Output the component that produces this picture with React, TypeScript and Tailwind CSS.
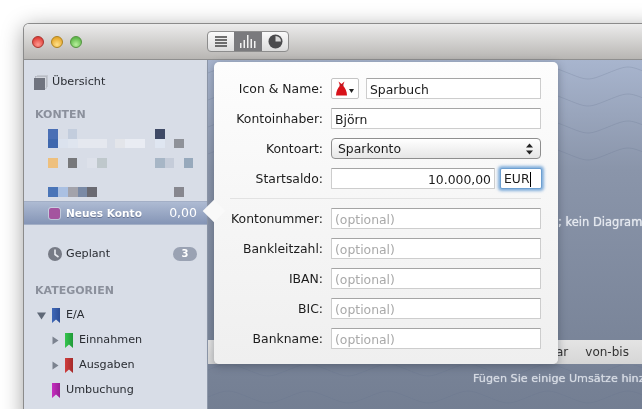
const font = "font-['DejaVu_Sans','Liberation_Sans',sans-serif]";

// pixelated account rows, every entry is one block of the mosaic
const blurRows: string[][] = [
  ["w-[10px] bg-[#4a6fb5]", "w-[10px]", "w-[9px] bg-[#c3cddd]", "w-[78px]", "w-[10px] bg-[#3f4a66]"],
  ["w-[10px] bg-[#3f68ae]", "w-[10px] bg-[#dbe2ee]", "w-[10px] bg-[#dfe5ef]", "w-[29px] bg-[#e5e8ef]", "w-[8px]", "w-[10px] bg-[#e3e5ea]", "w-[20px] bg-[#e9ecf3]", "w-[10px]", "w-[10px] bg-[#dfe6f1]", "w-[9px]", "w-[10px] bg-[#8f9299]"],
  [],
  ["w-[10px] bg-[#eec07e]", "w-[10px]", "w-[9px] bg-[#77787b]", "w-[10px]", "w-[10px] bg-[#dde1ea]", "w-[10px] bg-[#bfc8cc]", "w-[48px]", "w-[10px] bg-[#a7b6c6]", "w-[9px] bg-[#c5ccd9]", "w-[10px]", "w-[9px] bg-[#97a9bc]"],
  [],
  [],
  ["w-[10px] bg-[#4a75b8]", "w-[10px] bg-[#aac0e2]", "w-[10px] bg-[#a3a3ab]", "w-[9px] bg-[#7a8aa6]", "w-[10px] bg-[#6a6a72]", "w-[77px]", "w-[10px] bg-[#87878f]"],
];

function Bookmark({ top, bottom }: { top: string; bottom: string }) {
  return (
    <svg width="8" height="15" viewBox="0 0 8 15" className="shrink-0">
      <defs>
        <linearGradient id={`b${top}`} x1="0" x2="1" y1="0" y2="0">
          <stop offset="0" stopColor={top} />
          <stop offset="1" stopColor={bottom} />
        </linearGradient>
      </defs>
      <path d="M0 0h8v15l-4-3.5L0 15z" fill={`url(#b${top})`} />
    </svg>
  );
}

function Triangle({ down }: { down?: boolean }) {
  return (
    <svg width="9" height="9" viewBox="0 0 9 9" className="shrink-0">
      {down ? <path d="M0 1.5h9L4.5 8.5z" fill="#5f6877" /> : <path d="M1.5 0.5l6 4-6 4z" fill="#7b828f" />}
    </svg>
  );
}

function Sidebar() {
  return (
    <aside className="w-[184px] shrink-0 bg-[#d8dde7] pt-[10px] text-[11.2px] text-[#2a2d33] border-r border-[#8d97a9]">
      <div className="h-[24px] flex items-center pl-[10px] gap-[4px]">
        <svg width="14" height="15" viewBox="0 0 14 15" className="shrink-0">
          <rect x="3" y="0" width="11" height="12" fill="#c4c8d0" />
          <rect x="1.500" y="1.500" width="11" height="12" fill="#d5d8df" stroke="#a4a8b2" strokeWidth="0.5" />
          <rect x="0" y="3" width="11" height="12" fill="#70747f" />
        </svg>
        <span>Übersicht</span>
      </div>
      <div className="mt-[13px] h-[16px] pl-[11px] flex items-center text-[11px] font-bold text-[#8b909c]">KONTEN</div>

      <div className="mt-[6px] h-[72px] pl-[24px] blur-[0.5px]">
        {blurRows.map((row, i) => (
          <div key={i} className="flex h-[9.7px]">
            {row.map((block, j) => (
              <div key={j} className={block} />
            ))}
          </div>
        ))}
      </div>

      <div className="h-[24px] flex items-center pl-[25px] pr-[10px] pt-[1px] bg-gradient-to-b from-[#aebbd3] to-[#8595b6] border-y border-[#a3afc6] font-bold text-white">
        <div className="w-[11px] h-[11px] rounded-[2px] bg-[#a4549f] mr-[6px] outline outline-white/40" />
        <span className="text-[10.6px] [text-shadow:0_1px_0_rgba(60,70,100,0.5)]">Neues Konto</span>
        <span className="ml-auto font-normal text-[12.5px]">0,00</span>
      </div>

      <div className="mt-[17px] h-[24px] flex items-center pl-[24px] pr-[10px]">
        <svg width="14" height="14" viewBox="0 0 14 14" className="shrink-0">
          <circle cx="7" cy="7" r="7" fill="#777b86" />
          <path d="M7 2.500V7.500L10.500 10" fill="none" stroke="#e8eaef" strokeWidth="1.600" />
        </svg>
        <span className="ml-[4px]">Geplant</span>
        <span className="ml-auto w-[24px] h-[14px] rounded-full bg-[#9aa2b3] text-white font-bold text-[10px] leading-[14px] text-center">3</span>
      </div>

      <div className="mt-[17px] h-[16px] pl-[11px] flex items-center text-[11px] font-bold text-[#8b909c]">KATEGORIEN</div>

      <div className="mt-[4px] h-[25px] flex items-center pl-[13px]">
        <Triangle down />
        <div className="ml-[6px] flex items-center gap-[6px]">
          <Bookmark top="#3f68b8" bottom="#2d4e96" />
          <span>E/A</span>
        </div>
      </div>
      <div className="h-[25px] flex items-center pl-[27px]">
        <Triangle />
        <div className="ml-[5px] flex items-center gap-[6px]">
          <Bookmark top="#36c44f" bottom="#1f9a38" />
          <span>Einnahmen</span>
        </div>
      </div>
      <div className="h-[25px] flex items-center pl-[27px]">
        <Triangle />
        <div className="ml-[5px] flex items-center gap-[6px]">
          <Bookmark top="#cf3d3d" bottom="#a52a2a" />
          <span>Ausgaben</span>
        </div>
      </div>
      <div className="h-[25px] flex items-center pl-[28px] gap-[6px]">
        <Bookmark top="#c62fc0" bottom="#981f95" />
        <span>Umbuchung</span>
      </div>
    </aside>
  );
}

function Field({ label, children }: { label: string; children: React.ReactNode }) {
  return (
    <div className="flex items-center h-[21px] gap-[8px]">
      <label className="w-[109px] pt-[1px] text-right text-[12.4px] text-[#1c1c1c]">{label}</label>
      {children}
    </div>
  );
}

const inputCls =
  "h-[21px] min-w-0 bg-white px-[3px] pt-[1px] text-[12.4px] text-[#1c1c1c] placeholder:text-[#a9a9a9] border border-[#cdcdcd] border-t-[#a5a5a5] rounded-[1px] outline-none " + font;

function TextField({ value, placeholder }: { value?: string; placeholder?: string }) {
  return <input readOnly defaultValue={value} placeholder={placeholder} className={`${inputCls} w-[210px]`} />;
}

function Popover() {
  return (
    <div className="absolute left-[190px] top-[38px] w-[344px] h-[302px] rounded-[5px] bg-gradient-to-b from-[#fdfdfd] to-[#efefef] shadow-[0_2px_8px_rgba(30,35,50,0.35)] pt-[16px] flex flex-col">
      <div className="absolute left-[-8px] top-[141px] w-[16px] h-[16px] rotate-45 bg-[#f9f9f9]" />
      <div className="relative flex flex-col gap-[9px]">
        <Field label="Icon & Name:">
          <div className="w-[28px] h-[21px] border border-[#c4c4c4] rounded-[2px] bg-white flex items-center justify-center gap-[2px] shrink-0">
            <svg width="11" height="15" viewBox="0 0 11 15">
              <path d="M2.500 0.500L5.500 3l3-2.500-1.500 4C9 7 11 10 11 14.500H0C0 10 2 7 4 4.500z" fill="#d8121a" />
              <path d="M3.500 4.300h4" stroke="#8c3038" strokeWidth="0.8" />
            </svg>
            <svg width="5" height="4" viewBox="0 0 5 4" className="mt-[4px]">
              <path d="M0 0h5L2.500 4z" fill="#222" />
            </svg>
          </div>
          <input readOnly defaultValue="Sparbuch" className={`${inputCls} w-[175px] -ml-[1px]`} />
        </Field>
        <Field label="Kontoinhaber:">
          <TextField value="Björn" />
        </Field>
        <Field label="Kontoart:">
          <div className="w-[210px] h-[21px] flex items-center justify-between pl-[6px] pr-[7px] pt-[1px] text-[12.4px] text-[#1c1c1c] rounded-[4px] border border-[#8e8e8e] bg-gradient-to-b from-white to-[#e6e6e6]">
            <span>Sparkonto</span>
            <svg width="7" height="12" viewBox="0 0 7 12">
              <path d="M3.500 0.500L7 4.500H0zM3.500 11.500L0 7.500h7z" fill="#222" />
            </svg>
          </div>
        </Field>
        <Field label="Startsaldo:">
          <input readOnly defaultValue="10.000,00" className={`${inputCls} w-[164px] text-right`} />
          <div className="-ml-[3px] w-[42px] h-[21px] bg-white px-[3px] pt-[1px] text-[12.4px] text-[#1c1c1c] border border-[#6d9fd0] rounded-[2px] shadow-[0_0_3px_2px_rgba(90,150,210,0.75)] flex items-center">
            EUR
            <span className="w-[1px] h-[15px] bg-black" />
          </div>
        </Field>
        <div className="h-[1px] ml-[16px] mr-[17px] bg-[#e2e2e2]" />
        <Field label="Kontonummer:">
          <TextField placeholder="(optional)" />
        </Field>
        <Field label="Bankleitzahl:">
          <TextField placeholder="(optional)" />
        </Field>
        <Field label="IBAN:">
          <TextField placeholder="(optional)" />
        </Field>
        <Field label="BIC:">
          <TextField placeholder="(optional)" />
        </Field>
        <Field label="Bankname:">
          <TextField placeholder="(optional)" />
        </Field>
      </div>
    </div>
  );
}

function Waves() {
  return (
    <svg className="absolute inset-0 w-full h-full" aria-hidden="true">
      <defs>
        <pattern id="waves" width="80" height="27" patternUnits="userSpaceOnUse">
          <path d="M0 13C20 5 20 5 40 13S60 21 80 13" fill="none" stroke="#5f6d8a" strokeOpacity="0.22" strokeWidth="1" />
        </pattern>
      </defs>
      <rect width="100%" height="110" fill="url(#waves)" />
      <rect y="305" width="100%" height="40" fill="url(#waves)" />
    </svg>
  );
}

export default function App() {
  return (
    <div className={`relative w-[642px] h-[409px] overflow-hidden bg-white pl-[24px] pt-[24px] ${font}`}>
      <div className="relative w-[640px] h-[400px] rounded-t-[5px] shadow-[0_0_0_1px_#8b8b8b,0_4px_22px_rgba(0,0,0,0.4)] flex flex-col blur-[0.3px]">
        <header className="h-[36px] shrink-0 rounded-t-[5px] bg-gradient-to-b from-[#ececec] to-[#b8b6b3] flex items-center pl-[8px] border-b border-[#8f8f8f]">
          <div className="flex gap-[7px]">
            <div className="w-[12px] h-[12px] rounded-full bg-[radial-gradient(circle_at_50%_75%,#ff9a90,#e0403a_75%)] border border-[#a8332c]" />
            <div className="w-[12px] h-[12px] rounded-full bg-[radial-gradient(circle_at_50%_75%,#ffe08a,#e6a82c_75%)] border border-[#ae831f]" />
            <div className="w-[12px] h-[12px] rounded-full bg-[radial-gradient(circle_at_50%_75%,#b8f09c,#5fb84a_75%)] border border-[#549440]" />
          </div>
          <div className="ml-[125px] flex h-[21px] w-[82px] rounded-[4px] border border-[#8d8d8d] overflow-hidden bg-gradient-to-b from-[#fafafa] to-[#dcdcdc]">
            <div className="w-[26px] flex items-center justify-center">
              <svg width="12" height="11" viewBox="0 0 12 11">
                <path d="M0 1h12M0 4h12M0 7h12M0 10h12" stroke="#444" strokeWidth="1.300" />
              </svg>
            </div>
            <div className="w-[28px] flex items-center justify-center bg-[#7a7a7d]">
              <svg width="18" height="13" viewBox="0 0 18 13">
                <path d="M1 13V8h1.500v5zM4.500 13V5H6v8zM8 13V0h1.500v13zM11.500 13V4H13v9zM15 13V6h1.500v7z" fill="#f2f2f2" />
              </svg>
            </div>
            <div className="flex-1 flex items-center justify-center">
              <svg width="15" height="15" viewBox="0 0 15 15">
                <circle cx="7.500" cy="7.500" r="7" fill="#4b4b4d" />
                <path d="M7.500 7.500V2a5.500 5.500 0 0 1 5.500 5.500z" fill="#d8d8d8" />
              </svg>
            </div>
          </div>
        </header>
        <div className="flex flex-1 min-h-0">
          <Sidebar />
          <main className="relative flex-1 flex flex-col bg-gradient-to-b from-[#a8b5ce] via-[#8a95aa] via-30% to-[#727d91] text-[12px] whitespace-nowrap">
            <Waves />
            <div className="relative h-[280px] shrink-0 pt-[154px] pl-[350px] text-[11.5px] text-[#e4e8ef] [text-shadow:0_0_1px_#e4e8ef]">; kein Diagramm</div>
            <div className="relative h-[24px] shrink-0 bg-gradient-to-b from-[#e4e4e4] to-[#d6d6d6] flex items-center pl-[348px] gap-[17px] text-[#333]">
              <span>ar</span>
              <span>von-bis</span>
            </div>
            <div className="relative pt-[7px] pl-[265px] text-[11.2px] text-[#d5dae3] [text-shadow:0_0_1px_#d5dae3]">Fügen Sie einige Umsätze hinzu</div>
          </main>
        </div>
        <Popover />
      </div>
    </div>
  );
}
